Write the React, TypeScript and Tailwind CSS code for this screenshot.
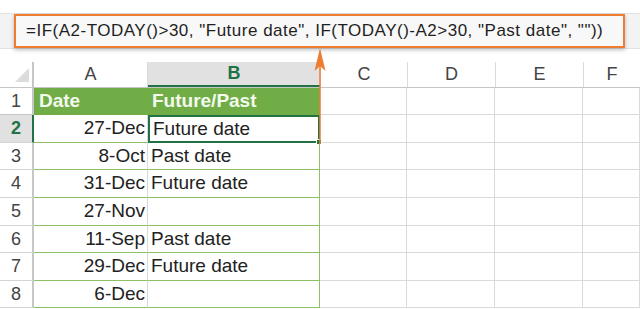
import React from "react";

const cols = ["C", "D", "E", "F"];
const colWidths = ["w-[87px]", "w-[88px]", "w-[88px]", "flex-1"];

const rows = [
  { n: 2, a: "27-Dec", b: "Future date", h: "h-[28px]" },
  { n: 3, a: "8-Oct", b: "Past date", h: "h-[27px]" },
  { n: 4, a: "31-Dec", b: "Future date", h: "h-[28px]" },
  { n: 5, a: "27-Nov", b: "", h: "h-[28px]" },
  { n: 6, a: "11-Sep", b: "Past date", h: "h-[27px]" },
  { n: 7, a: "29-Dec", b: "Future date", h: "h-[28px]" },
  { n: 8, a: "6-Dec", b: "", h: "h-[27px]" },
];

function EmptyCells() {
  return (
    <>
      {cols.map((c, i) => (
        <div key={c} className={`${colWidths[i]} h-full border-r border-b border-[#dadada]`} />
      ))}
    </>
  );
}

export default function App() {
  return (
    <div
      className="relative w-[640px] h-[309px] bg-white overflow-hidden text-[#333]"
      style={{ fontFamily: '"Liberation Sans", Arial, sans-serif' }}
    >
      {/* formula bar */}
      <div className="mt-[13px] h-[36px] bg-[#f3f3f3] border-y border-[#e2e2e2] flex items-center">
        <div className="ml-[14px] w-[611px] h-[34px] border-2 border-[#ed7d31] bg-[#f8f8f8] shadow-[0_2px_4px_rgba(0,0,0,0.25)] flex items-center pl-[10px] text-[17px] tracking-[0.5px] text-[#1f1f1f] whitespace-nowrap">
          =IF(A2-TODAY()&gt;30, "Future date", IF(TODAY()-A2&gt;30, "Past date", ""))
        </div>
      </div>

      {/* column headers */}
      <div className="mt-[13px] h-[26px] flex border-b border-[#c6c6c6] text-[18px] text-[#444]">
        <div className="w-[34px] h-full border-r-2 border-[#c6c6c6] relative">
          <svg className="absolute left-[15px] top-[6px]" width="14" height="14" viewBox="0 0 14 14">
            <polygon points="14,0 14,14 0,14" fill="#dcdcdc" />
          </svg>
        </div>
        <div className="w-[114px] h-full border-r border-[#dadada] flex items-center justify-center">A</div>
        <div className="w-[172px] h-full bg-[#e1e1e1] border-b-2 border-[#217346] flex items-center justify-center font-bold text-[#217346]">
          B
        </div>
        {cols.map((c, i) => (
          <div key={c} className={`${colWidths[i]} h-full border-l border-[#dadada] flex items-center justify-center`}>
            {c}
          </div>
        ))}
      </div>

      {/* row 1 */}
      <div className="h-[27px] flex text-[19px]">
        <div className="w-[34px] h-full border-r-2 border-b border-[#c6c6c6] flex items-center justify-center text-[#444] text-[18px]">1</div>
        <div className="w-[114px] h-full bg-[#70ad47] border-b border-[#70ad47] flex items-center pl-[5px] font-bold text-[#f4f9ee]">
          Date
        </div>
        <div className="w-[172px] h-full bg-[#70ad47] border-b border-[#70ad47] flex items-center pl-[4px] font-bold text-[#f4f9ee]">
          Future/Past
        </div>
        <EmptyCells />
      </div>

      {rows.map((r) => {
        const active = r.n === 2;
        return (
          <div key={r.n} className={`${r.h} flex text-[19px]`}>
            <div
              className={`w-[34px] h-full border-b border-[#d4d4d4] flex items-center justify-center text-[18px] ${
                active
                  ? "bg-[#e1e1e1] border-r-2 border-r-[#217346] text-[#217346] font-bold"
                  : "border-r-2 border-r-[#c6c6c6] text-[#444]"
              }`}
            >
              {r.n}
            </div>
            <div className="w-[114px] h-full border-b border-r border-b-[#8cc168] border-r-[#d9d9d9] flex items-center justify-end pr-[2px] text-[#222]">
              {r.a}
            </div>
            <div
              className={`relative w-[172px] h-full flex items-center pl-[3px] text-[#222] ${
                active ? "border-2 border-[#217346]" : "border-b border-r border-[#8cc168]"
              }`}
            >
              {r.b}
              {active && <div className="absolute -right-[4px] -bottom-[4px] w-[6px] h-[6px] bg-[#217346] border border-white" />}
            </div>
            <EmptyCells />
          </div>
        );
      })}

      {/* callout arrow */}
      <svg className="absolute left-[313px] top-[47px]" width="14" height="97" viewBox="0 0 14 97">
        <line x1="7" y1="10" x2="7" y2="97" stroke="#ed7d31" strokeWidth="1.5" />
        <path d="M7 1 L12.5 24 L7 19 L1.5 24 Z" fill="#ed7d31" />
      </svg>
    </div>
  );
}
